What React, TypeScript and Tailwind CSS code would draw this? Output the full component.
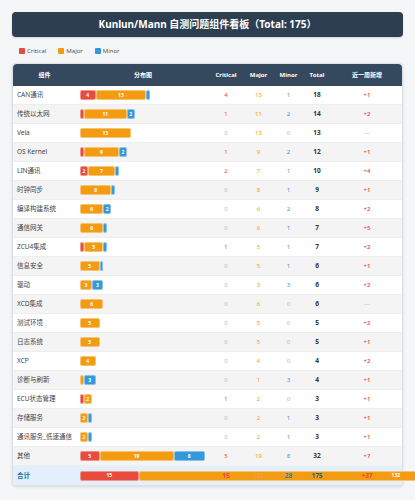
import React from "react";

type Row = [string, number, number, number, number, string];

const rows: Row[] = [
  ["CAN通讯", 4, 13, 1, 18, "+1"],
  ["传统以太网", 1, 11, 2, 14, "+2"],
  ["Vela", 0, 13, 0, 13, "—"],
  ["OS Kernel", 1, 9, 2, 12, "+1"],
  ["LIN通讯", 2, 7, 1, 10, "+4"],
  ["时钟同步", 0, 8, 1, 9, "+1"],
  ["编译构建系统", 0, 6, 2, 8, "+2"],
  ["通信网关", 0, 6, 1, 7, "+5"],
  ["ZCU4集成", 1, 5, 1, 7, "+2"],
  ["信息安全", 0, 5, 1, 6, "+1"],
  ["驱动", 0, 3, 3, 6, "+2"],
  ["XCD集成", 0, 6, 0, 6, "—"],
  ["测试环境", 0, 5, 0, 5, "+2"],
  ["日志系统", 0, 5, 0, 5, "+1"],
  ["XCP", 0, 4, 0, 4, "+2"],
  ["诊断与刷新", 0, 1, 3, 4, "+1"],
  ["ECU状态管理", 1, 2, 0, 3, "+1"],
  ["存储服务", 0, 2, 1, 3, "+1"],
  ["通讯服务_低速通信", 0, 2, 1, 3, "+1"],
  ["其他", 5, 19, 8, 32, "+7"],
];

const S = 3.9;

function Seg({ n, color }: { n: number; color: string }) {
  if (n <= 0) return null;
  return (
    <div
      className={`flex-none flex items-center justify-center rounded-[2px] border border-white/40 text-white font-bold text-[5px] leading-none ${color}`}
      style={{ width: n * S }}
    >
      {n >= 2 ? n : ""}
    </div>
  );
}

function Bar({ c, m, n }: { c: number; m: number; n: number }) {
  return (
    <div className="flex h-[10px]">
      <Seg n={c} color="bg-[#e74c3c]" />
      <Seg n={m} color="bg-[#f39c12]" />
      <Seg n={n} color="bg-[#3498db]" />
    </div>
  );
}

export default function App() {
  return (
    <div
      className="w-[415px] min-h-[500px] overflow-hidden bg-[#f5f6f8] px-[12px] pt-[12px]"
      style={{ fontFamily: '"Noto Sans", "Noto Sans CJK SC", sans-serif' }}
    >
      <div className="h-[25px] rounded-[4px] bg-[#2c3e50] flex items-center justify-center text-white font-bold text-[10px] shadow-[0_1px_2px_rgba(0,0,0,0.15)]">
        Kunlun/Mann 自测问题组件看板（Total: 175）
      </div>
      <div className="flex items-center gap-[12px] pl-[7px] h-[12px] mt-[8px] mb-[6px] text-[6px] text-[#555]">
        <div className="flex items-center gap-[2px]">
          <span className="w-[6px] h-[6px] rounded-[1px] bg-[#e74c3c]" />
          Critical
        </div>
        <div className="flex items-center gap-[2px]">
          <span className="w-[6px] h-[6px] rounded-[1px] bg-[#f39c12]" />
          Major
        </div>
        <div className="flex items-center gap-[2px]">
          <span className="w-[6px] h-[6px] rounded-[1px] bg-[#3498db]" />
          Minor
        </div>
      </div>
      <div className="rounded-[4px] bg-white border border-[#dde1e5] shadow-[0_1px_3px_rgba(0,0,0,0.12)]">
        <table className="w-full table-fixed border-separate border-spacing-0">
          <colgroup>
            <col className="w-[63px]" />
            <col className="w-[134px]" />
            <col className="w-[32px]" />
            <col className="w-[33px]" />
            <col className="w-[27px]" />
            <col className="w-[30px]" />
            <col />
          </colgroup>
          <thead>
            <tr className="text-white font-bold text-[6px]">
              <th className="h-[22px] bg-[#34495e] rounded-tl-[4px] text-center">组件</th>
              <th className="bg-[#34495e] text-center">分布图</th>
              <th className="bg-[#34495e] text-center">Critical</th>
              <th className="bg-[#34495e] text-center">Major</th>
              <th className="bg-[#34495e] text-center">Minor</th>
              <th className="bg-[#34495e] text-center">Total</th>
              <th className="bg-[#34495e] rounded-tr-[4px] text-center">近一周新增</th>
            </tr>
          </thead>
          <tbody>
            {rows.map(([name, c, m, n, t, r], i) => (
              <tr key={name} className={i % 2 === 0 ? "bg-white" : "bg-[#f4f4f4]"}>
                <td className="h-[19px] p-0 pl-[4px] text-[6.5px] text-[#444] whitespace-nowrap border-b border-[#eeeeee]">
                  {name}
                </td>
                <td className="p-0 pl-[4px] border-b border-[#eeeeee]">
                  <Bar c={c} m={m} n={n} />
                </td>
                <td className={`p-0 text-center text-[6px] border-b border-[#eeeeee] ${c ? "text-[#e74c3c]" : "text-[#bbbbbb]"}`}>{c}</td>
                <td className={`p-0 text-center text-[6px] border-b border-[#eeeeee] ${m ? "text-[#f39c12]" : "text-[#bbbbbb]"}`}>{m}</td>
                <td className={`p-0 text-center text-[6px] border-b border-[#eeeeee] ${n ? "text-[#3498db]" : "text-[#bbbbbb]"}`}>{n}</td>
                <td className="p-0 text-center text-[6.5px] font-bold text-[#333] border-b border-[#eeeeee]">{t}</td>
                <td className={`p-0 text-center text-[6px] font-semibold border-b border-[#eeeeee] ${r === "—" ? "text-[#cccccc] font-normal" : "text-[#e74c3c]"}`}>{r}</td>
              </tr>
            ))}
            <tr className="bg-[#e3effa]">
              <td className="h-[19px] p-0 pl-[4px] text-[6.5px] font-bold text-[#2471a3] rounded-bl-[4px]">合计</td>
              <td className="p-0 pl-[4px]">
                <Bar c={15} m={132} n={28} />
              </td>
              <td className="p-0 text-center text-[6.5px] font-bold text-[#e74c3c]">15</td>
              <td className="p-0 text-center text-[6.5px] font-bold text-[#f0a040]">132</td>
              <td className="p-0 text-center text-[6.5px] font-bold text-[#2980b9]">28</td>
              <td className="p-0 text-center text-[6.5px] font-bold text-[#2c5f8a]">175</td>
              <td className="p-0 text-center text-[6.5px] font-bold text-[#e74c3c] rounded-br-[4px]">+37</td>
            </tr>
          </tbody>
        </table>
      </div>
    </div>
  );
}
